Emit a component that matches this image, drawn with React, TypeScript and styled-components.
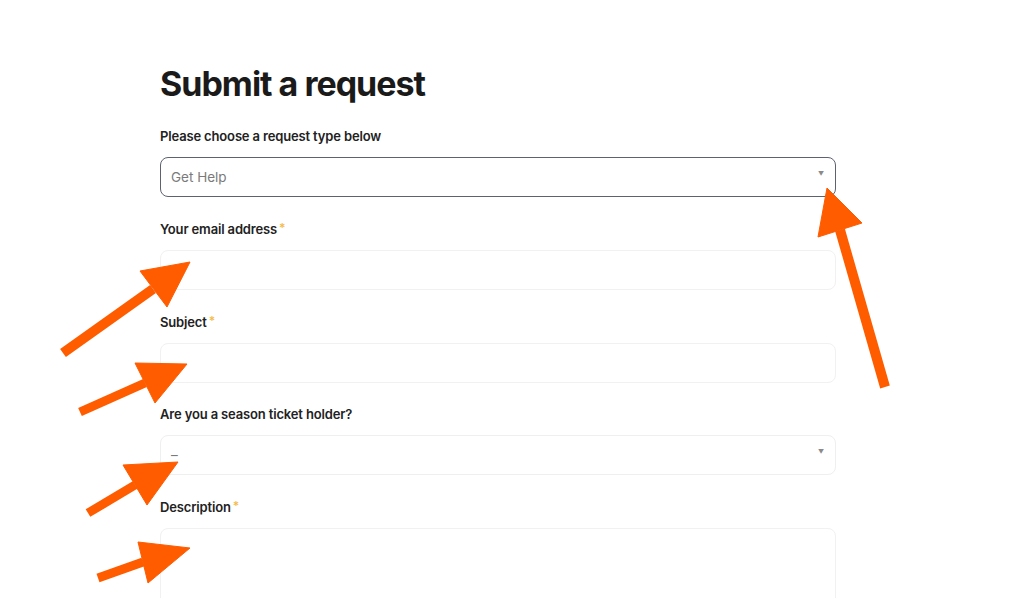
import styled, { createGlobalStyle } from 'styled-components'

const GlobalStyle = createGlobalStyle`
  body {
    margin: 0;
    background: #ffffff;
    font-family: Inter, "Noto Sans", sans-serif;
    color: #1a1a1a;
  }
`

type Arrow = { tail: [number, number]; mid: [number, number]; head: number[][]; w: number }

// annotation arrows drawn over the form
const arrows: Arrow[] = [
  { tail: [63, 353], mid: [153, 289], head: [[190, 262], [140, 271], [167, 307]], w: 10 },
  { tail: [80, 412], mid: [145, 383], head: [[187, 364], [135, 363], [155, 403]], w: 9 },
  { tail: [88, 513], mid: [135, 485], head: [[178, 462], [123, 465], [147, 505]], w: 9 },
  { tail: [98, 578], mid: [143, 562], head: [[190, 548], [138, 542], [148, 583]], w: 9 },
  { tail: [885, 387], mid: [840, 230], head: [[827, 188], [818, 237], [862, 223]], w: 10 },
]

export default function App() {
  return (
    <Page>
      <GlobalStyle />
      <Form>
        <Title>Submit a request</Title>
        <Group>
          <Label>Please choose a request type below</Label>
          <SelectBox $focused>
            <Value>Get Help</Value>
            <Caret>▼</Caret>
          </SelectBox>
        </Group>
        <Group>
          <Label>
            Your email address<Req>*</Req>
          </Label>
          <Field />
        </Group>
        <Group>
          <Label>
            Subject<Req>*</Req>
          </Label>
          <Field />
        </Group>
        <Group>
          <Label>Are you a season ticket holder?</Label>
          <SelectBox>
            <Value>–</Value>
            <Caret>▼</Caret>
          </SelectBox>
        </Group>
        <Group>
          <Label>
            Description<Req>*</Req>
          </Label>
          <TextArea />
        </Group>
      </Form>
      <Overlay width="1024" height="598" viewBox="0 0 1024 598">
        {arrows.map((a, i) => (
          <g key={i} fill="#ff5c00" stroke="#ff5c00">
            <line x1={a.tail[0]} y1={a.tail[1]} x2={a.mid[0]} y2={a.mid[1]} strokeWidth={a.w} />
            <polygon points={a.head.map((p) => p.join(',')).join(' ')} strokeWidth={1} />
          </g>
        ))}
      </Overlay>
    </Page>
  )
}

const Page = styled.div`
  position: relative;
  width: 1024px;
  height: 598px;
  overflow: hidden;
`

const Form = styled.div`
  width: 676px;
  padding: 64px 0 0 160px;
  display: flex;
  flex-direction: column;
  gap: 22px;
`

const Title = styled.h1`
  margin: 0 0 1px;
  font-size: 34px;
  line-height: 40px;
  font-weight: 700;
  letter-spacing: -1px;
  color: #1a1a1a;
`

const Group = styled.div`
  display: flex;
  flex-direction: column;
  gap: 12px;
`

const Label = styled.label`
  font-size: 13px;
  line-height: 18px;
  font-weight: 600;
  letter-spacing: -0.15px;
  color: #222;
`

const Req = styled.span`
  color: #f4bc4c;
  margin-left: 2px;
  font-size: 12px;
  vertical-align: 2px;
`

const SelectBox = styled.div<{ $focused?: boolean }>`
  height: 40px;
  box-sizing: border-box;
  border: 1px solid ${(p) => (p.$focused ? '#5c6270' : '#efefef')};
  border-radius: 8px;
  display: flex;
  align-items: center;
  justify-content: space-between;
  padding: 0 11px 0 10px;
`

const Value = styled.span`
  font-size: 13.5px;
  color: #7a7a7a;
`

const Caret = styled.span`
  font-size: 6px;
  color: #8a8a8a;
  margin-top: -7px;
`

const Field = styled.div`
  height: 40px;
  box-sizing: border-box;
  border: 1px solid #f1f1f1;
  border-radius: 8px;
`

const TextArea = styled.div`
  height: 120px;
  box-sizing: border-box;
  border: 1px solid #f1f1f1;
  border-radius: 8px;
`

const Overlay = styled.svg`
  position: absolute;
  left: 0;
  top: 0;
  pointer-events: none;
`
